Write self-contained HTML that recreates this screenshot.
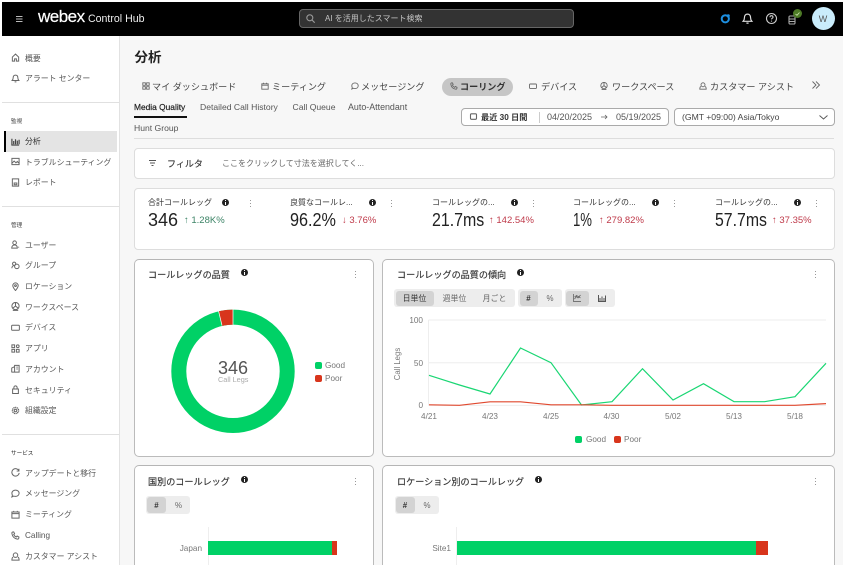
<!DOCTYPE html>
<html lang="ja"><head><meta charset="utf-8"><title>Webex Control Hub</title>
<style>
html,body{margin:0;padding:0;width:845px;height:565px;overflow:hidden;background:#fff}
body{font-family:"Liberation Sans","Noto Sans CJK JP",sans-serif;position:relative;color:#333}
#r{position:absolute;left:0;top:0;width:845px;height:565px;overflow:hidden;filter:blur(.3px)}
.a{position:absolute}
.t{position:absolute;white-space:nowrap;line-height:12px;height:12px;margin-top:-6px}
.n{font-size:7.9px;color:#555;left:25px;margin-top:-5px}
.h{font-size:5.600px;color:#444;left:11px;margin-top:-4.500px}
.i{position:absolute;fill:none;stroke:currentColor;stroke-width:1.1;color:#666;overflow:visible}
.tab{font-size:9.1px;color:#444;top:86px;margin-top:-5px}
.st{font-size:8.6px;color:#555}
.card{position:absolute;background:#fff;box-sizing:border-box;border:1px solid #ddd;border-radius:4px}
.c2{border:1px solid #bbb;border-top-color:#b5b5b5;border-radius:5px}
.kt{font-size:8px;color:#333;top:202px;margin-top:-5px}
.kv{font-size:18px;color:#222;top:220px;transform-origin:0 50%}
.kd{font-size:9.500px;top:220.500px}
.g{color:#3d8467}.rd{color:#bf3a4a}
.ct{font-size:9.100px;color:#333;margin-top:-4.500px;-webkit-text-stroke:.15px #333}
.b{position:absolute;background:#ededed;border-radius:3px}
.ba{position:absolute;background:#d3d3d3;border-radius:3px}
.bt{font-size:7.900px;color:#666;transform:translateX(-50%);margin-top:-5.500px}
.ax{font-size:8.200px;color:#777;margin-top:-5.500px}
.xl{top:416.500px;transform:translateX(-50%)}
.dots{position:absolute;width:1.400px;height:1.400px;background:#777;border-radius:50%;box-shadow:0 -3px 0 #777,0 3px 0 #777}
.info{position:absolute;width:7px;height:7px;background:#222;border-radius:50%}
.info:after{content:"";position:absolute;left:3px;top:3px;width:1.200px;height:3px;background:#fff}
.info:before{content:"";position:absolute;left:3px;top:1.200px;width:1.200px;height:1.200px;background:#fff}
.sq{position:absolute;width:7px;height:7px;border-radius:2px}
</style></head><body><div id="r">
<svg width="0" height="0" style="position:absolute"><defs>
<symbol id="home" viewBox="0 0 10 10"><path d="M1.500 4.500 5 1.200l3.500 3.300V9H6V6.500H4V9H1.500z" fill="none" stroke="currentColor"/></symbol>
<symbol id="bell" viewBox="0 0 10 10"><path d="M5 1.200c-1.800 0-2.600 1.300-2.600 3 0 1.500-.5 2.300-1.100 3h7.400c-.6-.7-1.100-1.500-1.100-3 0-1.700-.8-3-2.600-3zM4 8.800h2" fill="none" stroke="currentColor"/></symbol>
<symbol id="bars" viewBox="0 0 10 10"><path d="M1 2v7h8M3 8V4.500M5 8V2.500M7 8V4M9 8V3" fill="none" stroke="currentColor" stroke-width="1.300"/></symbol>
<symbol id="pic" viewBox="0 0 10 10"><path d="M1 1.500h8v7H1zM1 7l2.500-2.500L5.500 6.500 7 5l2 2" fill="none" stroke="currentColor"/></symbol>
<symbol id="rep" viewBox="0 0 10 10"><path d="M1.500 1h7v8h-7zM3.500 7.500h3v-2h-3z" fill="none" stroke="currentColor"/></symbol>
<symbol id="user" viewBox="0 0 10 10"><circle cx="4" cy="3" r="2" fill="none" stroke="currentColor"/><path d="M.8 9c0-2.200 1.300-3.400 3.200-3.400S7 6.800 7 9zM8.500 7.500v1" fill="none" stroke="currentColor"/></symbol>
<symbol id="grp" viewBox="0 0 10 10"><circle cx="3.500" cy="3" r="1.800" fill="none" stroke="currentColor"/><circle cx="6.500" cy="6" r="2.500" fill="none" stroke="currentColor"/><path d="M1 8c0-1.500.5-2.500 2-2.800" fill="none" stroke="currentColor"/></symbol>
<symbol id="pin" viewBox="0 0 10 10"><path d="M5 9.500C3 7 2 5.500 2 4a3 3 0 0 1 6 0c0 1.500-1 3-3 5.500z" fill="none" stroke="currentColor"/><circle cx="5" cy="4" r="1" fill="none" stroke="currentColor"/></symbol>
<symbol id="ws" viewBox="0 0 10 10"><circle cx="5" cy="4.500" r="4" fill="none" stroke="currentColor"/><path d="M5 1v3.500L2 7M5 4.500 8 7M2 9.300h6" fill="none" stroke="currentColor"/></symbol>
<symbol id="dev" viewBox="0 0 10 10"><path d="M1.500 2.500h7a.8.800 0 0 1 .8.800v4a.8.800 0 0 1-.8.800h-7a.8.800 0 0 1-.8-.800v-4a.8.800 0 0 1 .8-.800z" fill="none" stroke="currentColor"/></symbol>
<symbol id="app" viewBox="0 0 10 10"><path d="M1 1h3v3H1zM1 6h3v3H1zM6 6h3v3H6z" fill="none" stroke="currentColor"/><circle cx="7.500" cy="2.500" r="1.500" fill="none" stroke="currentColor"/></symbol>
<symbol id="acc" viewBox="0 0 10 10"><path d="M.8 9V4.500L4 3v6M4 9V1.500h5V9zM.5 9h9M6 3.500h1.500M6 5.500h1.500" fill="none" stroke="currentColor"/></symbol>
<symbol id="lock" viewBox="0 0 10 10"><path d="M1.800 4.500h6.400V9.500H1.800zM3.200 4.500V2.800a1.800 1.800 0 0 1 3.600 0v1.700" fill="none" stroke="currentColor"/></symbol>
<symbol id="gear" viewBox="0 0 10 10"><circle cx="5" cy="5" r="3.400" fill="none" stroke="currentColor" stroke-width="1.500" stroke-dasharray="1.300 .6"/><circle cx="5" cy="5" r="1.400" fill="none" stroke="currentColor"/></symbol>
<symbol id="upd" viewBox="0 0 10 10"><path d="M8.800 3.200A4.100 4.100 0 1 0 9.100 5.500M8.800 .8v2.600H6.300" fill="none" stroke="currentColor"/></symbol>
<symbol id="msg" viewBox="0 0 10 10"><path d="M5 1.200c2.300 0 4 1.500 4 3.500S7.300 8.200 5 8.200c-.7 0-1.300-.1-1.900-.4L1 8.800l.6-2C1.200 6.200 1 5.500 1 4.700c0-2 1.700-3.500 4-3.500z" fill="none" stroke="currentColor"/></symbol>
<symbol id="cal" viewBox="0 0 10 10"><path d="M1 2.200h8V9H1zM1 4h8M3 1v1.800M7 1v1.800" fill="none" stroke="currentColor"/></symbol>
<symbol id="ph" viewBox="0 0 10 10"><path d="M1.500 1.200 3 1l1 2-1 .9c.5 1.200 1.500 2.100 2.800 2.800l1-1.100 2 1.100-.2 1.500c-.2.600-.8.900-1.500.8C3.800 8.500 1.500 6 1 2.800c-.1-.7 0-1.300.5-1.600z" fill="none" stroke="currentColor"/></symbol>
<symbol id="cust" viewBox="0 0 10 10"><circle cx="5" cy="3.500" r="2.500" fill="none" stroke="currentColor"/><path d="M2.200 5.500C1.200 6.300 1 7.500 1 9h8c0-1.500-.2-2.700-1.200-3.500" fill="none" stroke="currentColor"/></symbol>
<symbol id="dash" viewBox="0 0 10 10"><path d="M1 1h3.200v3.200H1zM5.800 1H9v3.200H5.800zM1 5.800h3.200V9H1zM5.800 5.800H9V9H5.800z" fill="none" stroke="currentColor"/></symbol>
</defs></svg>

<!-- main bg -->
<div class="a" style="left:120px;top:35px;width:723px;height:530px;background:#f7f7f7"></div>
<div class="a" style="left:2px;top:35px;width:117px;height:530px;background:#fff"></div>
<div class="a" style="left:119px;top:35px;width:1px;height:530px;background:#e2e2e2"></div>

<!-- header -->
<div class="a" style="left:2px;top:2px;width:841px;height:33.500px;background:#000"></div>
<svg class="i" style="left:16px;top:16px;color:#bbb" width="7" height="6"><path d="M0 .5h6.500M0 3h6.500M0 5.500h6.500" stroke-width=".9"/></svg>
<div class="t" style="left:38px;top:17px;color:#fff;font-size:17px;letter-spacing:-.5px;-webkit-text-stroke:.2px #fff">webex</div>
<div class="t" style="left:88px;top:19px;color:#eee;font-size:10.600px">Control Hub</div>
<div class="a" style="left:299px;top:9px;width:275px;height:18.500px;box-sizing:border-box;background:#333;border:1px solid #666;border-radius:4px"></div>
<svg class="i" style="left:305.500px;top:14px;color:#999" width="9" height="9" viewBox="0 0 9 9"><circle cx="3.800" cy="3.800" r="3"/><path d="M6 6l2.700 2.700"/></svg>
<div class="t" style="left:325px;top:19px;color:#c4c4c4;font-size:8px">AI を活用したスマート検索</div>
<svg class="i" style="left:720px;top:13px" width="11" height="11" viewBox="0 0 11 11"><circle cx="5.300" cy="5.800" r="3.600" stroke="#1d8fe0" stroke-width="2"/><circle cx="8.300" cy="2.800" r="1.500" fill="#1d8fe0" stroke="none"/></svg>
<svg class="i" style="left:742px;top:13px;color:#ddd" width="11" height="12" viewBox="0 0 10 11"><path d="M5 1c-1.900 0-2.800 1.400-2.800 3.200 0 1.800-.5 2.600-1.200 3.400h8c-.7-.8-1.200-1.600-1.200-3.400C7.800 2.400 6.900 1 5 1zM4 9.300h2"/></svg>
<svg class="i" style="left:765.500px;top:13px;color:#ccc" width="11" height="11" viewBox="0 0 11 11"><circle cx="5.500" cy="5.500" r="5"/><path d="M4 4.200c0-2 3-2 3 0 0 1-1.500 1.100-1.500 2.200M5.500 7.600v1"/></svg>
<svg class="i" style="left:788px;top:15px;color:#aaa" width="8" height="10" viewBox="0 0 8 10"><rect x="1" y="1" width="6" height="8" rx="1"/><path d="M1 4h6M1 6.500h6"/></svg>
<div class="a" style="left:793px;top:9px;width:9px;height:9px;border-radius:50%;background:#4d7a26"></div>
<svg class="i" style="left:795px;top:11.500px;color:#cde8b0" width="5" height="4"><path d="M.5 2l1.500 1.300L4.500.5" stroke-width=".8"/></svg>
<div class="a" style="left:811.500px;top:7px;width:23px;height:23px;border-radius:50%;background:#c9ecfb"></div>
<div class="t" style="left:811.500px;width:23px;text-align:center;top:18.500px;font-size:9px;color:#555">W</div>

<!-- sidebar -->
<div class="a" style="left:2px;top:102px;width:117px;height:1px;background:#e0e0e0"></div>
<div class="a" style="left:2px;top:206px;width:117px;height:1px;background:#e0e0e0"></div>
<div class="a" style="left:2px;top:434px;width:117px;height:1px;background:#e0e0e0"></div>
<div class="a" style="left:6px;top:131px;width:111px;height:20.500px;background:#e4e4e4"></div>
<div class="a" style="left:4px;top:131px;width:2px;height:20.500px;background:#000"></div>
<svg class="i" style="left:11px;top:53px" width="9" height="9"><use href="#home"/></svg><div class="t n" style="top:57.500px">概要</div>
<svg class="i" style="left:11px;top:73.500px" width="9" height="9"><use href="#bell"/></svg><div class="t n" style="top:78px">アラート センター</div>
<div class="t h" style="top:120px">監視</div>
<svg class="i" style="left:11px;top:136.500px;color:#444" width="9" height="9"><use href="#bars"/></svg><div class="t n" style="top:141px;color:#333">分析</div>
<svg class="i" style="left:11px;top:157px" width="9" height="9"><use href="#pic"/></svg><div class="t n" style="top:161.500px">トラブルシューティング</div>
<svg class="i" style="left:11px;top:177.500px" width="9" height="9"><use href="#rep"/></svg><div class="t n" style="top:182px">レポート</div>
<div class="t h" style="top:224px">管理</div>
<svg class="i" style="left:11px;top:240px" width="9" height="9"><use href="#user"/></svg><div class="t n" style="top:244.500px">ユーザー</div>
<svg class="i" style="left:11px;top:260.500px" width="9" height="9"><use href="#grp"/></svg><div class="t n" style="top:265px">グループ</div>
<svg class="i" style="left:11px;top:281.500px" width="9" height="9"><use href="#pin"/></svg><div class="t n" style="top:286px">ロケーション</div>
<svg class="i" style="left:11px;top:302px" width="9" height="9"><use href="#ws"/></svg><div class="t n" style="top:306.500px">ワークスペース</div>
<svg class="i" style="left:11px;top:322.500px" width="9" height="9"><use href="#dev"/></svg><div class="t n" style="top:327px">デバイス</div>
<svg class="i" style="left:11px;top:343.500px" width="9" height="9"><use href="#app"/></svg><div class="t n" style="top:348px">アプリ</div>
<svg class="i" style="left:11px;top:364px" width="9" height="9"><use href="#acc"/></svg><div class="t n" style="top:368.500px">アカウント</div>
<svg class="i" style="left:11px;top:385px" width="9" height="9"><use href="#lock"/></svg><div class="t n" style="top:389.500px">セキュリティ</div>
<svg class="i" style="left:11px;top:405.500px" width="9" height="9"><use href="#gear"/></svg><div class="t n" style="top:410px">組織設定</div>
<div class="t h" style="top:452px;color:#222">サービス</div>
<svg class="i" style="left:11px;top:468px" width="9" height="9"><use href="#upd"/></svg><div class="t n" style="top:472.500px">アップデートと移行</div>
<svg class="i" style="left:11px;top:488.500px" width="9" height="9"><use href="#msg"/></svg><div class="t n" style="top:493px">メッセージング</div>
<svg class="i" style="left:11px;top:509.500px" width="9" height="9"><use href="#cal"/></svg><div class="t n" style="top:514px">ミーティング</div>
<svg class="i" style="left:11px;top:530.500px" width="9" height="9"><use href="#ph"/></svg><div class="t n" style="top:535px;font-size:8.200px">Calling</div>
<svg class="i" style="left:11px;top:551.500px" width="9" height="9"><use href="#cust"/></svg><div class="t n" style="top:556px">カスタマー アシスト</div>

<!-- page header -->
<div class="t" style="left:134.500px;top:57.500px;font-size:13.500px;font-weight:700;color:#222">分析</div>
<div class="a" style="left:442px;top:77.500px;width:71px;height:18px;border-radius:9px;background:#c6c6c6"></div>
<svg class="i" style="left:141.500px;top:81.500px" width="8" height="8"><use href="#dash"/></svg><div class="t tab" style="left:152px">マイ ダッシュボード</div>
<svg class="i" style="left:260.500px;top:81.500px" width="8" height="8"><use href="#cal"/></svg><div class="t tab" style="left:272px">ミーティング</div>
<svg class="i" style="left:350.500px;top:81.500px" width="8" height="8"><use href="#msg"/></svg><div class="t tab" style="left:361px">メッセージング</div>
<svg class="i" style="left:449.500px;top:81.500px" width="8" height="8"><use href="#ph"/></svg><div class="t tab" style="left:460px;font-weight:700;color:#333">コーリング</div>
<svg class="i" style="left:529px;top:81.500px" width="8" height="8"><use href="#dev"/></svg><div class="t tab" style="left:541px">デバイス</div>
<svg class="i" style="left:600px;top:81.500px" width="8" height="8"><use href="#ws"/></svg><div class="t tab" style="left:612px">ワークスペース</div>
<svg class="i" style="left:699px;top:81.500px" width="8" height="8"><use href="#cust"/></svg><div class="t tab" style="left:710px">カスタマー アシスト</div>
<svg class="i" style="left:812px;top:81px" width="8" height="8"><path d="M.5 .5 4 4 .5 7.500M4 .5 7.500 4 4 7.500" stroke-width=".9"/></svg>

<div class="t st" style="left:134px;top:107px;color:#222;-webkit-text-stroke:.2px #222;font-size:8.400px">Media Quality</div>
<div class="a" style="left:134px;top:116px;width:53px;height:1.500px;background:#111"></div>
<div class="t st" style="left:200px;top:107px">Detailed Call History</div>
<div class="t st" style="left:292.500px;top:107px">Call Queue</div>
<div class="t st" style="left:348px;top:107px;font-size:8.900px">Auto-Attendant</div>
<div class="t st" style="left:134px;top:128px">Hunt Group</div>
<div class="a" style="left:134px;top:138px;width:700px;height:1px;background:#ddd"></div>

<div class="a" style="left:461px;top:107.500px;width:208px;height:18.500px;box-sizing:border-box;background:#fff;border:1px solid #aaa;border-radius:4px"></div>
<div class="a" style="left:674px;top:107.500px;width:161px;height:18.500px;box-sizing:border-box;background:#fff;border:1px solid #aaa;border-radius:4px"></div>
<svg class="i" style="left:469.500px;top:113px" width="7" height="7"><rect x=".5" y=".8" width="6" height="5.500" rx="1"/></svg>
<div class="t" style="left:481px;top:117.500px;font-size:8.200px;font-weight:700;color:#333">最近 30 日間</div>
<div class="a" style="left:538.500px;top:111.500px;width:1px;height:11px;background:#ccc"></div>
<div class="t st" style="left:547px;top:117px;font-size:9px">04/20/2025</div>
<svg class="i" style="left:601px;top:114px;color:#666" width="7" height="6"><path d="M0 3h6M4 1l2 2-2 2" stroke-width=".8"/></svg>
<div class="t st" style="left:616px;top:117px;font-size:9px">05/19/2025</div>
<div class="t st" style="left:682px;top:117px;color:#444;font-size:8.650px">(GMT +09:00) Asia/Tokyo</div>
<svg class="i" style="left:819px;top:114.500px;color:#555" width="9" height="5"><path d="M.5 .5 4.500 4 8.500 .5" stroke-width=".9"/></svg>

<!-- filter -->
<div class="card" style="left:134px;top:148px;width:701px;height:31px"></div>
<svg class="i" style="left:149px;top:160px;color:#555" width="7" height="6"><path d="M0 .5h7M1 3h5M2.500 5.500h2" stroke-width=".9"/></svg>
<div class="t" style="left:167px;top:164px;font-size:9px;color:#333;-webkit-text-stroke:.15px #333">フィルタ</div>
<div class="t" style="left:222px;top:164px;font-size:8px;color:#666">ここをクリックして寸法を選択してく...</div>

<!-- KPI -->
<div class="card" style="left:134px;top:188px;width:701px;height:62px"></div>
<div class="t kt" style="left:148px">合計コールレッグ</div><div class="info" style="left:222px;top:198.500px"></div><div class="dots" style="left:249.500px;top:203px"></div>
<div class="t kv" style="left:148px">346</div><div class="t kd g" style="left:184px">↑ 1.28K%</div>
<div class="t kt" style="left:290px">良質なコールレ...</div><div class="info" style="left:369px;top:198.500px"></div><div class="dots" style="left:390.500px;top:203px"></div>
<div class="t kv" style="left:290px;transform:scaleX(.9)">96.2%</div><div class="t kd rd" style="left:342px">↓ 3.76%</div>
<div class="t kt" style="left:432px">コールレッグの...</div><div class="info" style="left:511px;top:198.500px"></div><div class="dots" style="left:532.500px;top:203px"></div>
<div class="t kv" style="left:432px;transform:scaleX(.885)">21.7ms</div><div class="t kd rd" style="left:489px">↑ 142.54%</div>
<div class="t kt" style="left:573px">コールレッグの...</div><div class="info" style="left:651.500px;top:198.500px"></div><div class="dots" style="left:673.500px;top:203px"></div>
<div class="t kv" style="left:573px;transform:scaleX(.73)">1%</div><div class="t kd rd" style="left:599px">↑ 279.82%</div>
<div class="t kt" style="left:715px">コールレッグの...</div><div class="info" style="left:793.500px;top:198.500px"></div><div class="dots" style="left:815.500px;top:203px"></div>
<div class="t kv" style="left:715px;transform:scaleX(.88)">57.7ms</div><div class="t kd rd" style="left:772px">↑ 37.35%</div>

<!-- donut card -->
<div class="card c2" style="left:134px;top:259px;width:240px;height:198px"></div>
<div class="t ct" style="left:148px;top:273px">コールレッグの品質</div><div class="info" style="left:240.500px;top:269px"></div><div class="dots" style="left:354.500px;top:274px"></div>
<svg class="a" style="left:163px;top:301px" width="140" height="140" viewBox="0 0 140 140">
<circle cx="70" cy="70.300" r="54.200" fill="none" stroke="#00d166" stroke-width="15"/>
<path d="M70 16.100A54.200 54.200 0 0 0 57.300 17.600" fill="none" stroke="#d8351c" stroke-width="15"/>
<path d="M70 8.500V23.500M55.500 9.800 59 24.500" stroke="#fff" stroke-width=".7" fill="none"/>
</svg>
<div class="t" style="left:218px;top:368px;font-size:18px;color:#555">346</div>
<div class="t" style="left:218px;top:379.500px;font-size:7.300px;color:#aaa">Call Legs</div>
<div class="sq" style="left:315px;top:361.500px;background:#00d166"></div><div class="t ax" style="left:325px;top:365px">Good</div>
<div class="sq" style="left:315px;top:374.500px;background:#d8351c"></div><div class="t ax" style="left:325px;top:378px">Poor</div>

<!-- trend card -->
<div class="card c2" style="left:382px;top:259px;width:453px;height:198px"></div>
<div class="t ct" style="left:397px;top:273px">コールレッグの品質の傾向</div><div class="info" style="left:516.500px;top:269px"></div><div class="dots" style="left:815px;top:274px"></div>
<div class="b" style="left:394px;top:289px;width:121px;height:18px"></div>
<div class="ba" style="left:396px;top:290.500px;width:37.500px;height:15.500px"></div>
<div class="t bt" style="left:414.500px;top:298.500px;color:#333">日単位</div>
<div class="t bt" style="left:454.500px;top:298.500px">週単位</div>
<div class="t bt" style="left:494.500px;top:298.500px">月ごと</div>
<div class="b" style="left:518px;top:289px;width:43.500px;height:18px"></div>
<div class="ba" style="left:519.500px;top:290.500px;width:18.500px;height:15.500px"></div>
<div class="t bt" style="left:528.500px;top:298.500px;color:#333;font-weight:700">#</div>
<div class="t bt" style="left:550px;top:298.500px">%</div>
<div class="b" style="left:564.500px;top:289px;width:50.500px;height:18px"></div>
<div class="ba" style="left:566px;top:290.500px;width:22.500px;height:15.500px"></div>
<svg class="i" style="left:573px;top:294px;color:#555" width="8" height="8"><path d="M.5 0v7.500H8M1.500 5l2-2.500 1.500 1.500L7.500 1M1.500 3l2-1.500 2 1L7.500 4" stroke-width=".7"/></svg>
<svg class="i" style="left:598px;top:294px;color:#555" width="8" height="8"><path d="M.5 1v6.500H8M2 7V4M4 7V2.500M6 7V4M7.500 7V1.500" stroke-width="1"/></svg>
<div class="t ax" style="right:422px;top:320px">100</div>
<div class="t ax" style="right:422px;top:363px">50</div>
<div class="t ax" style="right:422px;top:405.500px">0</div>
<div class="t ax" style="left:398px;top:363px;transform:translateX(-50%) rotate(-90deg);font-size:7.800px">Call Legs</div>
<div class="t ax xl" style="left:429px">4/21</div><div class="t ax xl" style="left:490px">4/23</div><div class="t ax xl" style="left:551px">4/25</div><div class="t ax xl" style="left:611.500px">4/30</div><div class="t ax xl" style="left:673px">5/02</div><div class="t ax xl" style="left:734px">5/13</div><div class="t ax xl" style="left:795px">5/18</div>
<svg class="a" style="left:382px;top:259px" width="453" height="198" viewBox="382 259 453 198">
<path d="M428.500 320H826M428.500 362.700H826M428.500 405.400H826M428.500 320V405.400" stroke="#eee" stroke-width="1" fill="none"/>
<polyline points="429,375.300 459.500,385 490,394 520.500,348 551,362.700 581.500,405 612,401.700 642.500,368.700 673,400 703.500,383.700 734,401.700 764.500,401.700 795,396.700 826,363.300" fill="none" stroke="#1ad673" stroke-width="1.200"/>
<polyline points="429,404.800 459.500,405.300 490,401.800 520.500,401.800 551,404.800 581.500,404.800 612,405.300 642.500,405.300 673,405.300 703.500,405.300 734,405.300 764.500,405.300 795,405.300 826,403.600" fill="none" stroke="#e0492f" stroke-width="1.200"/>
</svg>
<div class="sq" style="left:575px;top:435.500px;background:#00d166"></div><div class="t ax" style="left:586px;top:439px">Good</div>
<div class="sq" style="left:614px;top:435.500px;background:#d8351c"></div><div class="t ax" style="left:624px;top:439px">Poor</div>

<!-- bottom cards -->
<div class="card c2" style="left:134px;top:465px;width:240px;height:120px"></div>
<div class="t ct" style="left:148px;top:480px">国別のコールレッグ</div><div class="info" style="left:240.500px;top:476px"></div><div class="dots" style="left:354.500px;top:481px"></div>
<div class="b" style="left:146px;top:496px;width:44px;height:18px"></div>
<div class="ba" style="left:147px;top:497px;width:19px;height:16px"></div>
<div class="t bt" style="left:156.500px;top:505px;color:#333;font-weight:700">#</div>
<div class="t bt" style="left:178.500px;top:505px">%</div>
<div class="a" style="left:207.500px;top:527px;width:1px;height:38px;background:#eee"></div>
<div class="t ax" style="right:643px;top:548.500px">Japan</div>
<div class="a" style="left:208px;top:541px;width:123.500px;height:14px;background:#00d166"></div>
<div class="a" style="left:331.500px;top:541px;width:5px;height:14px;background:#d8351c"></div>

<div class="card c2" style="left:382px;top:465px;width:453px;height:120px"></div>
<div class="t ct" style="left:397px;top:480px">ロケーション別のコールレッグ</div><div class="info" style="left:534.500px;top:476px"></div><div class="dots" style="left:815px;top:481px"></div>
<div class="b" style="left:394.500px;top:496px;width:44px;height:18px"></div>
<div class="ba" style="left:395.500px;top:497px;width:19px;height:16px"></div>
<div class="t bt" style="left:405px;top:505px;color:#333;font-weight:700">#</div>
<div class="t bt" style="left:427px;top:505px">%</div>
<div class="a" style="left:456px;top:527px;width:1px;height:38px;background:#eee"></div>
<div class="t ax" style="right:394px;top:548.500px">Site1</div>
<div class="a" style="left:456.500px;top:541px;width:299.500px;height:14px;background:#00d166"></div>
<div class="a" style="left:756px;top:541px;width:12px;height:14px;background:#d8351c"></div>
</div></body></html>
